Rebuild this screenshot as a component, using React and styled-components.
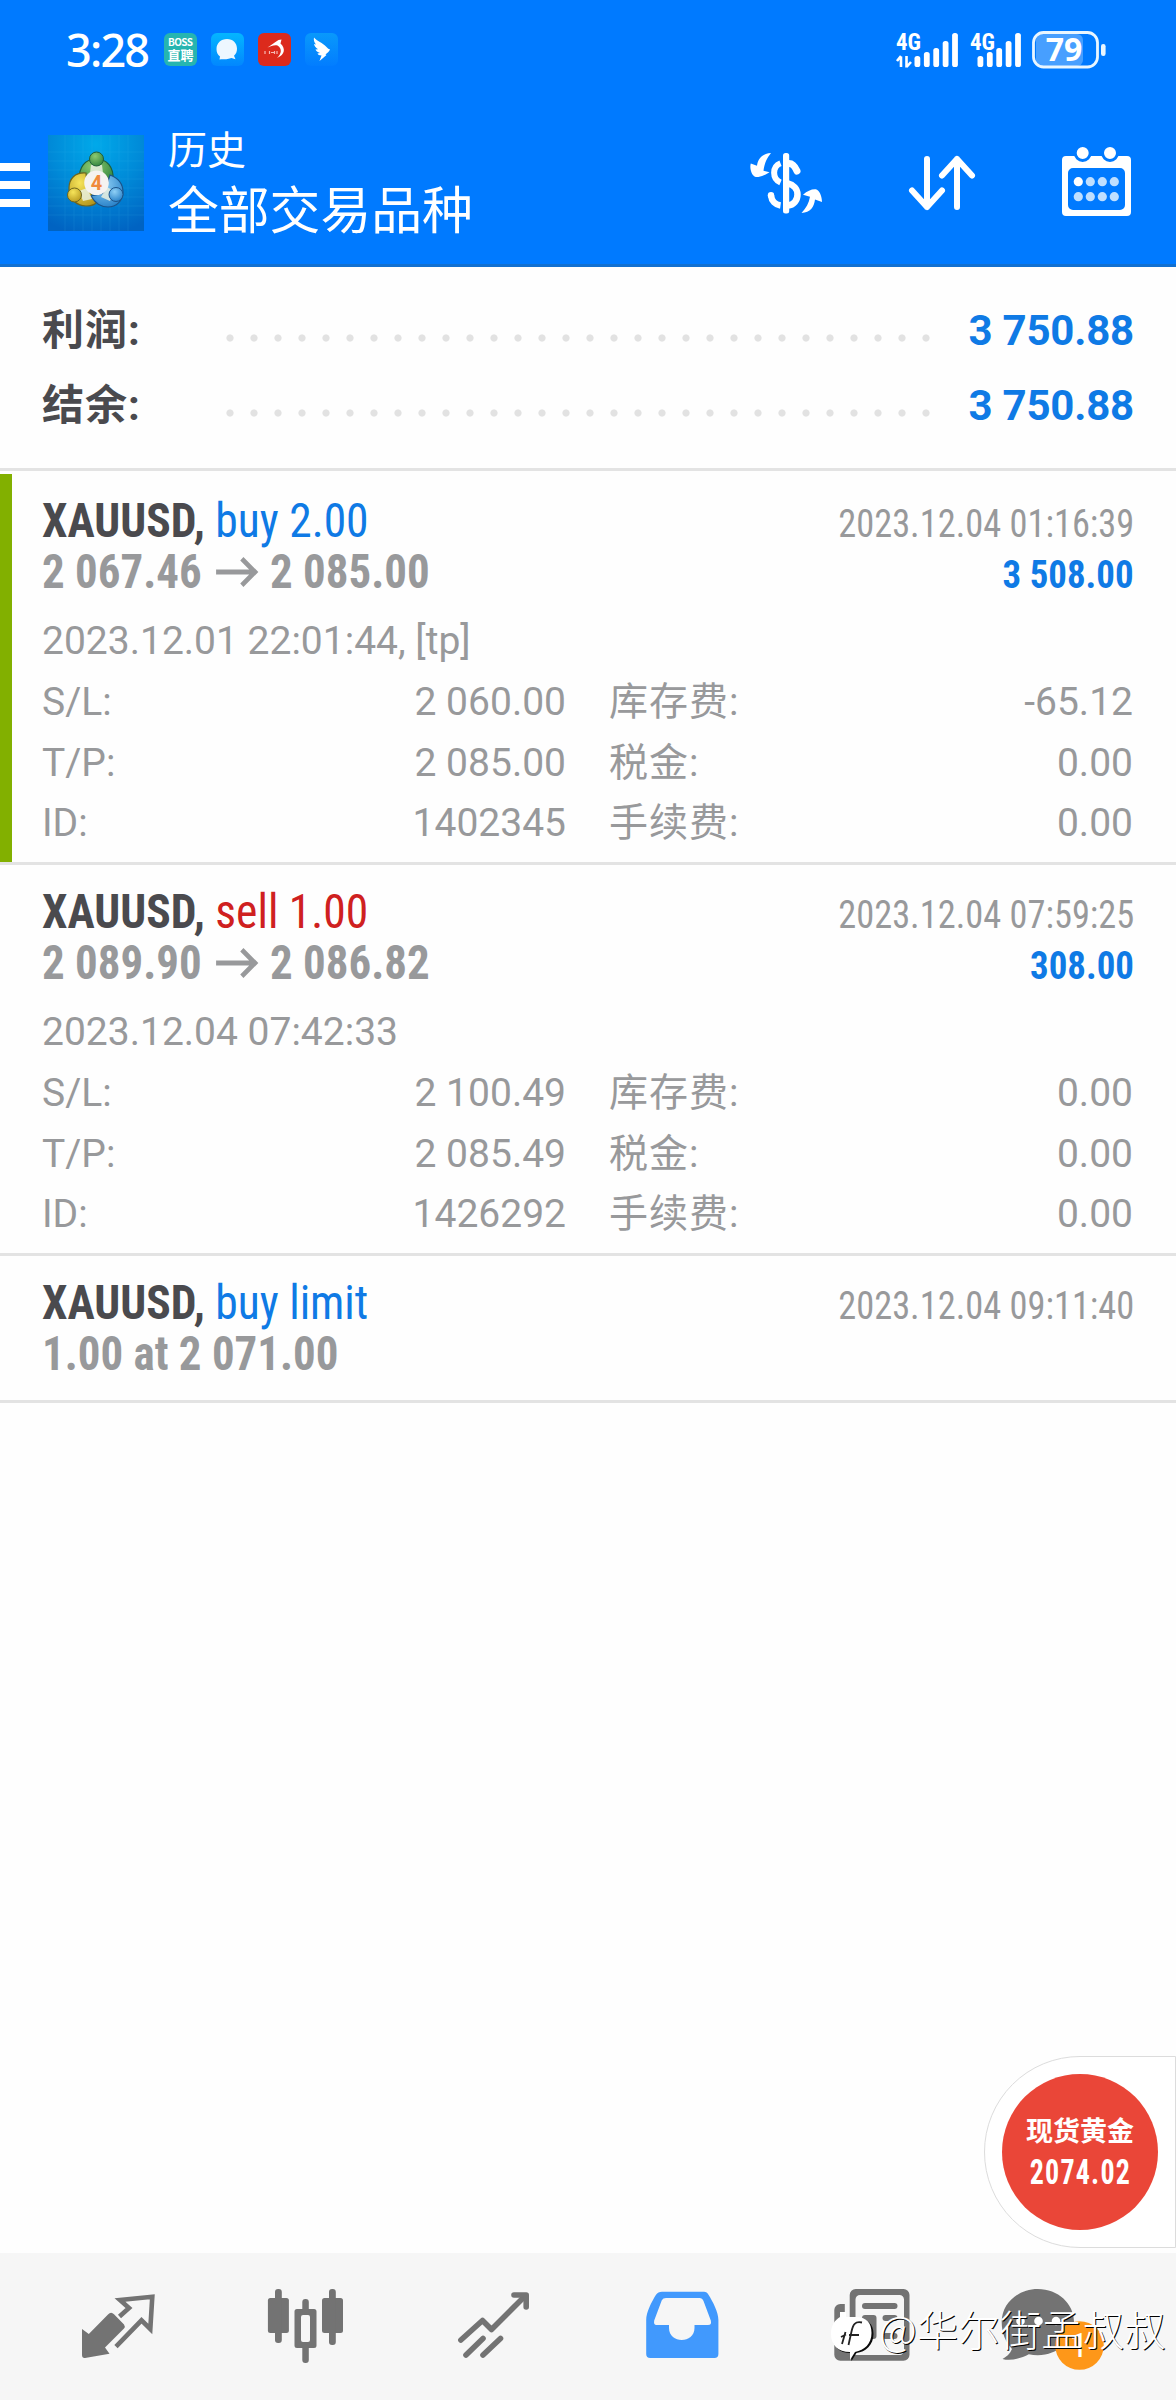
import React from "react"
import styled, { createGlobalStyle } from "styled-components"

const GlobalStyle = createGlobalStyle`
  * {
    box-sizing: border-box;
  }
  body {
    margin: 0;
    background: #fff;
    font-family: Roboto, "Noto Sans CJK SC", sans-serif;
  }
  svg {
    display: block;
    overflow: visible;
    flex-shrink: 0;
  }
`

const summary = [
  { label: "利润:", value: "3 750.88" },
  { label: "结余:", value: "3 750.88" },
]

const deals = [
  {
    symbol: "XAUUSD,",
    side: "buy 2.00",
    color: "#0f7ae5",
    from: "2 067.46",
    to: "2 085.00",
    closed: "2023.12.04 01:16:39",
    profit: "3 508.00",
    opened: "2023.12.01 22:01:44, [tp]",
    marked: true,
    details: [
      ["S/L:", "2 060.00", "库存费:", "-65.12"],
      ["T/P:", "2 085.00", "税金:", "0.00"],
      ["ID:", "1402345", "手续费:", "0.00"],
    ],
  },
  {
    symbol: "XAUUSD,",
    side: "sell 1.00",
    color: "#cf2020",
    from: "2 089.90",
    to: "2 086.82",
    closed: "2023.12.04 07:59:25",
    profit: "308.00",
    opened: "2023.12.04 07:42:33",
    details: [
      ["S/L:", "2 100.49", "库存费:", "0.00"],
      ["T/P:", "2 085.49", "税金:", "0.00"],
      ["ID:", "1426292", "手续费:", "0.00"],
    ],
  },
  {
    symbol: "XAUUSD,",
    side: "buy limit",
    color: "#0f7ae5",
    order: "1.00 at 2 071.00",
    closed: "2023.12.04 09:11:40",
  },
]

const SignalIcon = ({ arrows }) => (
  <svg width={arrows ? 63 : 51} height="36" viewBox={arrows ? "0 0 63 36" : "0 0 51 36"} fill="#fff">
    <SmallText x="0" y="18" textLength="25" lengthAdjust="spacingAndGlyphs">
      4G
    </SmallText>
    {arrows && (
      <path d="M5 24.500V35M5 24l-4 5M10.500 24V35.500M10.500 35l4.500-5" stroke="#fff" strokeWidth="2.600" fill="none" />
    )}
    {[24, 20, 16, 9, 1].map((top, i) => (
      <rect key={top} x={(arrows ? 18.5 : 7.5) + i * 9.4} y={top} width="5.800" height={35 - top} rx="2.600" />
    ))}
  </svg>
)

const BatteryIcon = () => (
  <svg width="75" height="38" viewBox="0 0 75 38">
    <rect x="4" y="3" width="47" height="32" rx="6" fill="#fff" opacity="0.28" />
    <rect x="1.500" y="1.500" width="64" height="34.500" rx="10" fill="none" stroke="#e9f6ff" strokeWidth="2.800" />
    <rect x="69" y="13" width="4.600" height="12" rx="2.200" fill="#e9f6ff" />
    <BatteryText x="32" y="30" textAnchor="middle">
      79
    </BatteryText>
  </svg>
)

const BossIcon = () => (
  <svg width="33" height="33" viewBox="0 0 33 33">
    <rect width="33" height="33" rx="6" fill="#26b5b0" />
    <BadgeText x="16.500" y="13" size={10} textLength="25">
      BOSS
    </BadgeText>
    <BadgeText x="16.500" y="27" size={13}>
      直聘
    </BadgeText>
  </svg>
)

const ChatAppIcon = () => (
  <svg width="33" height="33" viewBox="0 0 33 33">
    <defs>
      <linearGradient id="chatApp" x1="0" y1="0" x2="0" y2="1">
        <stop offset="0" stopColor="#04b6ff" />
        <stop offset="1" stopColor="#0287fe" />
      </linearGradient>
    </defs>
    <rect width="33" height="33" rx="6" fill="url(#chatApp)" />
    <path d="M16 6c6 0 10 4 10 9.700 0 3-1 5-3 7l1.500 3.600-4-1.300C14 27 12 26 8.500 26.500l.5-3C6.500 21.500 5.500 19 5.500 16 5.500 10 10 6 16 6z" fill="#edf7ff" />
  </svg>
)

const MarlinIcon = () => (
  <svg width="33" height="33" viewBox="0 0 33 33">
    <rect width="33" height="33" rx="6" fill="#dc2a1c" />
    <path d="M9.500 14.500c3-1.500 6-4.500 11-7.500l3-.5-1 4c5 4.500 5 11-3.500 14.500 4.500-4 5.500-9.500.5-12.500-3.500-1-6.500 1-10 2z" fill="#fff" />
    <path d="M7 18v3M11.500 18v3M13 19.500h3M16.500 18v3M19 18v3" stroke="#f6b9b2" strokeWidth="1.200" />
  </svg>
)

const WingIcon = () => (
  <svg width="33" height="33" viewBox="0 0 33 33">
    <defs>
      <linearGradient id="wingApp" x1="0" y1="0" x2="0" y2="1">
        <stop offset="0" stopColor="#0999fb" />
        <stop offset="1" stopColor="#027dff" />
      </linearGradient>
    </defs>
    <rect width="33" height="33" rx="6" fill="url(#wingApp)" />
    <path d="M9 4.500c3 4 8.500 5 12.500 9.500 1.500 1.500 2 2 3.500 2.500-1 2-2.500 3.500-4.500 5l1 .5-7 6 2-5.500c-2.500 0-3.500-1-4-2l2.500-.5c-2.500-1-4-2-4.500-3.500l2.500-.2c-2.500-1.800-3.500-3-4-5.300l2 .5C9 9 8.500 7 9 4.500z" fill="#fff" />
  </svg>
)

const MenuIcon = () => (
  <svg width="30" height="44" viewBox="0 0 30 44" fill="#fff">
    <rect y="2" width="30" height="8" />
    <rect y="20" width="30" height="8" />
    <rect y="38" width="30" height="8" />
  </svg>
)

const PlatformLogo = () => (
  <svg width="96" height="96" viewBox="0 0 96 96">
    <defs>
      <radialGradient id="tile" cx="0.5" cy="0.1" r="0.95">
        <stop offset="0" stopColor="#00a9ea" />
        <stop offset="0.500" stopColor="#008ad8" />
        <stop offset="1" stopColor="#0063c2" />
      </radialGradient>
      <radialGradient id="green" cx="0.4" cy="0.3" r="0.8">
        <stop offset="0" stopColor="#8cca70" />
        <stop offset="1" stopColor="#2a7f3a" />
      </radialGradient>
      <radialGradient id="yellow" cx="0.4" cy="0.3" r="0.8">
        <stop offset="0" stopColor="#f6e45a" />
        <stop offset="1" stopColor="#b3941b" />
      </radialGradient>
      <radialGradient id="azure" cx="0.4" cy="0.3" r="0.8">
        <stop offset="0" stopColor="#8fd0f6" />
        <stop offset="1" stopColor="#1f7ac4" />
      </radialGradient>
    </defs>
    <rect width="96" height="96" fill="url(#tile)" />
    <path d="M17 0V96M26 0V96M35 0V96M44 0V96M53 0V96M62 0V96M71 0V96M80 0V96M0 17H96M0 26H96M0 35H96M0 44H96M0 53H96M0 62H96M0 71H96M0 80H96" stroke="#4cc3f5" strokeWidth="0.800" opacity="0.160" />
    <path d="M31 45c0-13 6-21 17-21s18 8 17 21l-5 4-12-12-12 6z" fill="url(#green)" stroke="#1f5f3a" strokeWidth="1.200" />
    <path d="M38 38c-11-1-17 6-17 15 0 10 7 18 17 18 5 0 9-2 10-3l-9-17z" fill="url(#yellow)" stroke="#6d651f" strokeWidth="1.200" />
    <path d="M62 40c8 3 13 9 13 17 0 9-7 15-15 15-7 0-13-4-17-11l13-3z" fill="url(#azure)" stroke="#1c548a" strokeWidth="1.200" />
    <path d="M43 30l-1 8h13l-1-8zM31 56l8-3 5 11-9 2zM66 56l-7-4-6 10 9 4z" fill="#e9f0df" opacity="0.850" />
    <circle cx="48.500" cy="24" r="7" fill="url(#green)" stroke="#1f5f3a" />
    <circle cx="26.500" cy="60" r="7" fill="url(#yellow)" stroke="#6d651f" />
    <circle cx="68" cy="59.500" r="7" fill="url(#azure)" stroke="#1c548a" />
    <circle cx="48.500" cy="47.700" r="12.300" fill="#f5f3f1" />
    <LogoText x="48.500" y="55" textAnchor="middle">
      4
    </LogoText>
  </svg>
)

const CurrencyIcon = () => (
  <svg width="72" height="72" viewBox="0 0 72 72" fill="#fff">
    <path d="M21 6C12 6.500 8 12 7 18.800L.8 16.500C-.5 20 1 28 5 29.800c3.500.8 9-1 14.500-4.600L13.500 23.800C14.500 16 17 11 21 6z" />
    <path d="M51.500 66c9-.5 12.500-6 13.500-13.500l7 2.500c0-4-1.500-10-5-12.300-4-1.200-9 1-14 5l7 2C59 56 56 61 51.500 66z" />
    <rect x="33" y="6" width="6.200" height="60.500" rx="2.500" />
    <g fill="none" stroke="#fff" strokeWidth="6">
      <path d="M30.500 16.200C22 19.500 22 32 30.500 35.500" />
      <path d="M39 16.500c3.500 0 6 3 8 7.500" strokeWidth="7" strokeLinecap="round" />
      <path d="M38 36.500c5 1 9.500 5 9.500 11s-4 10.500-9.500 11" strokeWidth="6.500" />
      <path d="M21 48.500c.6 5.500 4.500 9.300 9.500 10" strokeWidth="6.500" />
    </g>
    <circle cx="21" cy="48.300" r="3.200" />
  </svg>
)

const SortIcon = () => (
  <svg width="72" height="72" viewBox="0 0 72 72">
    <g fill="none" stroke="#fff" strokeWidth="6" strokeLinecap="round" strokeLinejoin="round">
      <path d="M21 12V60M6 43.500L21 60 36 43.500" />
      <path d="M51 60V12M36 28.500L51 12 66 28.500" />
    </g>
  </svg>
)

const CalendarIcon = () => (
  <svg width="72" height="72" viewBox="0 0 72 72">
    <path
      fillRule="evenodd"
      fill="#fff"
      d="M4 9H65a4 4 0 0 1 4 4V65a4 4 0 0 1-4 4H4a4 4 0 0 1-4-4V13a4 4 0 0 1 4-4zM11 21a5 5 0 0 0-5 5V58a5 5 0 0 0 5 5H58a5 5 0 0 0 5-5V26a5 5 0 0 0-5-5z"
    />
    {[20.7, 48].map((x) => (
      <circle key={x} cx={x} cy="6" r="7.500" fill="#fff" stroke="#007aff" strokeWidth="3" />
    ))}
    {[34.7, 49.7].map((y) =>
      [16.3, 28.3, 40.3, 52.3].map((x) => (
        <circle key={x + y} cx={x} cy={y} r="4.600" fill={x + y === 51 ? "#fff" : "#bfdfff"} />
      ))
    )}
  </svg>
)

const Arrow = () => (
  <svg width="45" height="30" viewBox="0 0 45 30">
    <path d="M0 15H41M27.500 1.800L41.500 15 27.500 28.200" fill="none" stroke="#98999b" strokeWidth="5" />
  </svg>
)

const QuotesIcon = () => (
  <svg width="96" height="97" viewBox="0 0 96 97">
    <path d="M12 51l6.800 5L38 36.500q3-3.500 6-.3L54 46.500q1.500 2 0 4L35 69.500l4.500 6.300L15 80q-3 .3-3-3z" fill="#737373" />
    <path d="M49.500 38.500L59 30 50 22 82.300 18.700 80.300 51 71.500 42.300 46 68.700" fill="none" stroke="#737373" strokeWidth="4.600" />
  </svg>
)

const ChartIcon = () => (
  <svg width="96" height="97" viewBox="0 0 96 97" fill="#737373">
    <rect x="9.900" y="20" width="21" height="35" rx="2.500" />
    <rect x="17" y="11" width="6.800" height="54" rx="3" />
    <path fillRule="evenodd" d="M39 31H56a2.500 2.500 0 0 1 2.500 2.500V67.500A2.500 2.500 0 0 1 56 70H39a2.500 2.500 0 0 1-2.500-2.500V33.500A2.500 2.500 0 0 1 39 31zM45 37q-2 0-2 2V62q0 2 2 2h5q2 0 2-2V39q0-2-2-2z" />
    <rect x="44.300" y="21" width="6.500" height="14" rx="3" />
    <rect x="44.300" y="66" width="6.500" height="19" rx="3" />
    <rect x="64" y="20" width="21" height="35" rx="2.500" />
    <rect x="71" y="11" width="6.800" height="56" rx="3" />
  </svg>
)

const TradeIcon = () => (
  <svg width="96" height="97" viewBox="0 0 96 97">
    <g fill="none" stroke="#737373" strokeWidth="5.600" strokeLinecap="round" strokeLinejoin="round">
      <path d="M14.900 62L36.500 42.500 45.500 51.500 79 18" />
      <path d="M68 17H80.200V29" />
      <path d="M20 77L37 60.500M37 77L54.500 60.500" />
    </g>
  </svg>
)

const InboxIcon = () => (
  <svg width="96" height="97" viewBox="0 0 96 97">
    <path
      fillRule="evenodd"
      fill="#4199fd"
      d="M28 13.700H70q3 0 4.500 3C79 24 84.400 34 84.400 42V76q0 4-4 4H16.200q-4 0-4-4V42c0-8 5.300-18 9.800-25.300q2-3 6-3zM32 20q-3 0-4.200 2.300L20.200 42.500q-.8 4.500 2.300 4.500H35V50c0 16 25.500 16 25.500 0V47H74q4 0 2.800-4.500L69.500 23q-1.200-3-4-3z"
    />
  </svg>
)

const NewsIcon = () => (
  <svg width="96" height="97" viewBox="0 0 96 97" fill="#737373">
    <path
      fillRule="evenodd"
      d="M27.700 17a6 6 0 0 1 6-6H81.500a6 6 0 0 1 6 6V76.700a6 6 0 0 1-6 6H18.300a6 6 0 0 1-6-6V32a6 6 0 0 1 6-6H22.800V72a2.500 2.500 0 0 0 4.900 0zM38 17a4.500 4.500 0 0 0-4.500 4.500V74q0 3-1 3H77.500a4.500 4.500 0 0 0 4.500-4.500V21.500A4.500 4.500 0 0 0 77.500 17z"
    />
    <rect x="40" y="25" width="35.500" height="6" rx="3" />
    <rect x="40" y="37" width="14.500" height="24" rx="3" />
    <rect x="60.500" y="37" width="15" height="6" rx="3" />
    <rect x="60.500" y="55" width="15" height="6" rx="3" />
  </svg>
)

const MessagesIcon = () => (
  <svg width="96" height="97" viewBox="0 0 96 97">
    <path d="M27.800 11C48 11 64 25.500 64 44S48 77 27.800 77.300c-3 0-6-.3-9-1C12 80 1 83.500-7.500 81 -4 79 0 76 2 71-4.500 64-8.300 55-8.300 44-8.300 25.500 8 11 27.800 11z" fill="#737373" />
    <g fill="#fff">
      <circle cx="10.500" cy="43" r="4.300" />
      <circle cx="28.500" cy="43" r="4.300" />
      <circle cx="46" cy="43" r="4.300" />
    </g>
    <circle cx="69.500" cy="67.500" r="24.300" fill="#fe9719" />
    <CountText x="69" y="79" textAnchor="middle">
      1
    </CountText>
  </svg>
)

const BlobIcon = () => (
  <svg width="44" height="50" viewBox="0 0 44 50">
    <path d="M9 5V1h5v4h10c12 0 18 6 18 16 0 11-8 18-17 19l-5 8-1-8C8 40 1 34 1 22 1 13 4 8 9 5z" fill="#0a0a0a" transform="translate(0.500 1)" />
    <path d="M9 5V0h6v5h9c12 0 16.500 6 16.500 16 0 11-7 17-16.500 19l-5 8v-8C7 40 0 33 0 22 0 13 4 8 9 5z" fill="#fff" />
    <path d="M31 10.500c-7-1.500-9 2-10.500 9L17.500 33M10 25l5-2.500M14.500 20L11 32M18 23h10" fill="none" stroke="#222" strokeWidth="1.800" />
  </svg>
)

const tabs = [QuotesIcon, ChartIcon, TradeIcon, InboxIcon, NewsIcon, MessagesIcon]

const DealCard = ({ deal }) => (
  <Card>
    {deal.marked && <Marker />}
    <HeadRow>
      <Title>
        <b>{deal.symbol}</b> <Side color={deal.color}>{deal.side}</Side>
      </Title>
      <ClosedAt>{deal.closed}</ClosedAt>
    </HeadRow>
    <HeadRow>
      {deal.order ? (
        <Prices>{deal.order}</Prices>
      ) : (
        <Prices>
          {deal.from}
          <Arrow />
          {deal.to}
        </Prices>
      )}
      <Profit>{deal.profit}</Profit>
    </HeadRow>
    {deal.details && (
      <Details>
        <OpenedAt>{deal.opened}</OpenedAt>
        {deal.details.map(([label, value, feeLabel, fee]) => (
          <DetailRow key={label}>
            <DetailLabel>{label}</DetailLabel>
            <DetailValue>{value}</DetailValue>
            <FeeLabel>{feeLabel}</FeeLabel>
            <DetailValue>{fee}</DetailValue>
          </DetailRow>
        ))}
      </Details>
    )}
  </Card>
)

const App = () => (
  <Page>
    <GlobalStyle />
    <Header>
      <StatusBar>
        <Clock>3:28</Clock>
        <AppIcons>
          <BossIcon />
          <ChatAppIcon />
          <MarlinIcon />
          <WingIcon />
        </AppIcons>
        <SystemIcons>
          <SignalIcon arrows />
          <SignalIcon />
          <BatteryIcon />
        </SystemIcons>
      </StatusBar>
      <AppBar>
        <MenuIcon />
        <LogoBox>
          <PlatformLogo />
        </LogoBox>
        <Heading>
          <h2>历史</h2>
          <h1>全部交易品种</h1>
        </Heading>
        <Actions>
          <CurrencyIcon />
          <SortIcon />
          <CalendarIcon />
        </Actions>
      </AppBar>
    </Header>
    <Summary>
      {summary.map(({ label, value }) => (
        <SummaryRow key={label}>
          <SummaryLabel>{label}</SummaryLabel>
          <Leader />
          <SummaryValue>{value}</SummaryValue>
        </SummaryRow>
      ))}
    </Summary>
    <List>
      {deals.map((deal) => (
        <DealCard key={deal.closed} deal={deal} />
      ))}
    </List>
    <PriceBubble>
      <PriceCircle>
        <span>现货黄金</span>
        <b>2074.02</b>
      </PriceCircle>
    </PriceBubble>
    <NavBar>
      {tabs.map((Icon, i) => (
        <NavItem key={i}>
          <Icon />
        </NavItem>
      ))}
    </NavBar>
    <Signature>
      <BlobIcon />
      <span>@华尔街孟叔叔</span>
    </Signature>
  </Page>
)

export default App

// the condensed face is set a little tighter than its own width
const condensed = `
  font-family: "Roboto Condensed", Roboto, "Noto Sans CJK SC", sans-serif;
  font-stretch: condensed;
`

const Page = styled.div`
  position: relative;
  display: flex;
  flex-direction: column;
  width: 1176px;
  height: 2400px;
  overflow: hidden;
  background: #fefefe;
`

const Header = styled.header`
  height: 267px;
  background: #007aff;
  border-bottom: 3px solid #1270d0;
  color: #fff;
`

const StatusBar = styled.div`
  display: flex;
  align-items: center;
  height: 99px;
  padding: 0 69px 0 66px;
`

const Clock = styled.div`
  width: 98px;
  font: 500 45px/60px "Noto Sans", sans-serif;
  letter-spacing: -1.8px;
`

const AppIcons = styled.div`
  display: flex;
  gap: 14px;
`

const SystemIcons = styled.div`
  display: flex;
  align-items: center;
  gap: 11px;
  margin-left: auto;
`

const SmallText = styled.text`
  font: bold 23px "Roboto Condensed", Roboto, sans-serif;
`

const BatteryText = styled.text`
  font: bold 32px "Open Sans", sans-serif;
  fill: #fff;
`

const BadgeText = styled.text`
  font: bold ${({ size }) => size}px "Noto Sans CJK SC", sans-serif;
  text-anchor: middle;
  fill: #fff;
`

const LogoText = styled.text`
  font: bold 20px Roboto, sans-serif;
  fill: #f08a3c;
`

const CountText = styled.text`
  font: 34px Roboto, sans-serif;
  fill: #fff;
`

const AppBar = styled.div`
  display: flex;
  align-items: center;
  height: 165px;
  padding: 3px 42px 0 0;
`

const LogoBox = styled.div`
  margin: 0 24px 0 18px;
`

const Heading = styled.div`
  padding-bottom: 3px;
  h1,
  h2 {
    margin: 0;
    font-weight: 400;
  }
  h2 {
    font-size: 39px;
    line-height: 60px;
  }
  h1 {
    font-size: 50.800px;
    line-height: 62px;
  }
`

const Actions = styled.div`
  display: flex;
  gap: 84px;
  margin-left: auto;
`

const Summary = styled.section`
  height: 204px;
  padding: 26px 42px 0;
  border-bottom: 3px solid #e3e3e3;
`

const SummaryRow = styled.div`
  display: flex;
  align-items: center;
  height: 75px;
  font-size: 42px;
  line-height: 75px;
  font-weight: 700;
`

const SummaryLabel = styled.span`
  width: 176px;
  letter-spacing: 1px;
  color: #4a4a4e;
`

const Leader = styled.span`
  width: 720px;
  height: 8px;
  margin-top: 15px;
  background: radial-gradient(circle at 12px 4px, #e2e2e2 3.2px, transparent 4px) 0 0 / 24px 8px;
`

const SummaryValue = styled.span`
  margin-left: auto;
  letter-spacing: -0.2px;
  color: #0f7ae5;
`

const List = styled.section`
  flex: 1;
  padding-top: 3px;
`

const Card = styled.article`
  position: relative;
  padding: 21px 42px;
  border-bottom: 3px solid #e3e3e3;
`

const Marker = styled.i`
  position: absolute;
  top: 0;
  bottom: 0;
  left: 0;
  width: 12px;
  background: #82b000;
`

const HeadRow = styled.div`
  display: flex;
  align-items: baseline;
  justify-content: space-between;
  height: 51px;
  line-height: 51px;
  white-space: nowrap;
  ${condensed}
`

const Title = styled.div`
  font-size: 48px;
  color: #4a4a4e;
  transform: scaleX(0.948);
  transform-origin: left;
`

const Side = styled.span`
  color: ${({ color }) => color};
`

const ClosedAt = styled.div`
  font-size: 39px;
  color: #98999b;
  transform: scaleX(0.933);
  transform-origin: right;
`

const Prices = styled.div`
  display: flex;
  align-items: center;
  font-size: 48px;
  font-weight: 700;
  color: #98999b;
  transform: scaleX(0.936);
  transform-origin: left;
  svg {
    margin: 0 13px 0 15px;
  }
`

const Profit = styled.div`
  font-size: 39px;
  font-weight: 700;
  color: #0f7ae5;
  transform: scaleX(0.945);
  transform-origin: right;
`

const Details = styled.div`
  margin: 13.5px 0 -12.5px;
  font-size: 39px;
  line-height: 60.5px;
  color: #98999b;
  white-space: nowrap;
`

const OpenedAt = styled.div`
  height: 61.5px;
`

const DetailRow = styled.div`
  display: flex;
  height: 60.5px;
`

const DetailLabel = styled.span`
  width: 200px;
`

const FeeLabel = styled.span`
  width: 200px;
  margin-left: 43px;
  letter-spacing: 1px;
`

const DetailValue = styled.span`
  width: 324px;
  text-align: right;
`

const PriceBubble = styled.aside`
  position: absolute;
  top: 2056px;
  right: 0;
  width: 192px;
  height: 192px;
  padding: 17px;
  border: 1px solid #dcdcdc;
  border-radius: 96px 0 0 96px;
  background: #fff;
`

const PriceCircle = styled.div`
  display: flex;
  flex-direction: column;
  align-items: center;
  width: 156px;
  height: 156px;
  padding-top: 38px;
  border-radius: 50%;
  background: #ea4638;
  color: #fff;
  span {
    font-size: 27px;
    font-weight: 700;
    line-height: 40px;
  }
  b {
    font-size: 35px;
    line-height: 42px;
    letter-spacing: 1.500px;
    transform: scaleX(0.8);
    ${condensed}
  }
`

const NavBar = styled.nav`
  display: flex;
  align-items: center;
  height: 147px;
  padding: 0 24px;
  background: #f6f6f6;
`

const NavItem = styled.div`
  display: flex;
  justify-content: center;
  flex: 1;
`

const Signature = styled.div`
  position: absolute;
  top: 2304px;
  left: 831px;
  display: flex;
  gap: 4px;
  font: 300 41.500px/48px "Noto Sans CJK SC", sans-serif;
  color: #fff;
  text-shadow: 1px 1px 0 #000;
  white-space: nowrap;
  svg {
    margin-top: 8px;
  }
`
